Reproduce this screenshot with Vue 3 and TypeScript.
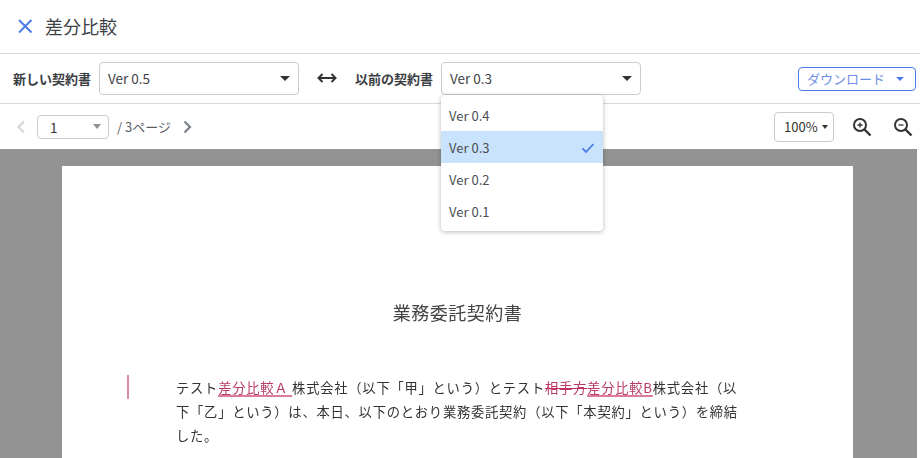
<script setup lang="ts">
const versions: { label: string; selected: boolean }[] = [
  { label: 'Ver 0.4', selected: false },
  { label: 'Ver 0.3', selected: true },
  { label: 'Ver 0.2', selected: false },
  { label: 'Ver 0.1', selected: false },
]
</script>

<template>
  <div class="app">
    <header class="title-bar">
      <svg class="close" width="16" height="16" viewBox="0 0 16 16" aria-hidden="true">
        <path d="M2 2 14.500 14.500M14.500 2 2 14.500" fill="none" stroke="#4a7be6" stroke-width="2" />
      </svg>
      <h1>差分比較</h1>
    </header>

    <section class="compare-bar">
      <span class="label">新しい契約書</span>
      <div class="select new-select">
        <span>Ver 0.5</span>
        <i class="caret"></i>
      </div>
      <svg class="swap" width="20" height="12" viewBox="0 0 20 12" aria-hidden="true">
        <path d="M1.500 6H18.500M5.500 2 1.500 6 5.500 10M14.500 2 18.500 6 14.500 10" fill="none" stroke="#333" stroke-width="2" />
      </svg>
      <span class="label">以前の契約書</span>
      <div class="select old-select">
        <span>Ver 0.3</span>
        <i class="caret"></i>
        <ul class="menu">
          <li v-for="v in versions" :key="v.label" :class="{ selected: v.selected }">
            <span>{{ v.label }}</span>
            <svg v-if="v.selected" width="14" height="12" viewBox="0 0 14 12" aria-hidden="true">
              <path d="M1.500 6.400 5 10 12.500 2" fill="none" stroke="#4a7be6" stroke-width="1.800" />
            </svg>
          </li>
        </ul>
      </div>
      <button class="download" type="button">
        ダウンロード
        <i class="caret small blue"></i>
      </button>
    </section>

    <section class="page-bar">
      <svg class="chev" width="10" height="14" viewBox="0 0 10 14" aria-hidden="true">
        <path d="M8 1.500 2.500 7 8 12.500" fill="none" stroke="#d3d6da" stroke-width="2.200" />
      </svg>
      <div class="page-select">
        <span>1</span>
        <i class="caret gray"></i>
      </div>
      <span class="page-total">/ 3ページ</span>
      <svg class="chev next" width="10" height="14" viewBox="0 0 10 14" aria-hidden="true">
        <path d="M2.500 1.500 8 7 2.500 12.500" fill="none" stroke="#7b818a" stroke-width="2.200" />
      </svg>
      <div class="zoom-select">
        <span>100%</span>
        <i class="caret tiny"></i>
      </div>
      <svg class="zoom-icon in" width="20" height="20" viewBox="0 0 20 20" aria-hidden="true">
        <circle cx="8" cy="8" r="6" fill="none" stroke="#333" stroke-width="2" />
        <path d="M12.500 12.500 18.500 18.500" stroke="#333" stroke-width="2.400" />
        <path d="M5.500 8H10.500M8 5.500V10.500" stroke="#333" stroke-width="1.300" />
      </svg>
      <svg class="zoom-icon" width="20" height="20" viewBox="0 0 20 20" aria-hidden="true">
        <circle cx="8" cy="8" r="6" fill="none" stroke="#333" stroke-width="2" />
        <path d="M12.500 12.500 18.500 18.500" stroke="#333" stroke-width="2.400" />
        <path d="M5.500 8H10.500" stroke="#333" stroke-width="1.300" />
      </svg>
    </section>

    <main class="viewer">
      <article class="sheet">
        <h2>業務委託契約書</h2>
        <div class="clause">
          <span class="change-mark"></span>
          <p>テスト<span class="added">差分比較Ａ </span>株式会社（以下「甲」という）とテスト<span class="removed">相手方</span><span class="added">差分比較B</span>株式会社（以下「乙」という）は、本日、以下のとおり業務委託契約（以下「本契約」という）を締結した。</p>
        </div>
      </article>
    </main>
  </div>
</template>

<style>
html, body { margin: 0; background: #fff; }
</style>

<style scoped>
.app {
  width: 920px;
  height: 458px;
  overflow: hidden;
  display: flex;
  flex-direction: column;
  font-family: "Noto Sans CJK JP", "Noto Sans", sans-serif;
  color: #333;
  background: #fff;
}
.title-bar {
  box-sizing: content-box;
  height: 51px;
  flex: none;
  display: flex;
  align-items: center;
  padding: 0 0 2px 17px;
  border-bottom: 1px solid #d8d9dc;
}
.close { margin-right: 12px; }
h1 { margin: 0; font-size: 18px; font-weight: 400; color: #3c3f44; }
.compare-bar {
  height: 49px;
  flex: none;
  display: flex;
  align-items: center;
  padding-left: 13px;
  border-bottom: 1px solid #d8d9dc;
}
.label { font-size: 13px; font-weight: 700; color: #3a3d42; white-space: nowrap; }
.select {
  position: relative;
  box-sizing: border-box;
  height: 33px;
  width: 200px;
  margin-left: 8px;
  display: flex;
  align-items: center;
  justify-content: space-between;
  padding: 0 8px;
  border: 1px solid #c8ccd2;
  border-radius: 4px;
  font-size: 13.5px;
  color: #3c4047;
}
.select > span { margin-bottom: 2px; }
.caret {
  display: block;
  width: 0;
  height: 0;
  border-left: 5px solid transparent;
  border-right: 5px solid transparent;
  border-top: 5px solid #333;
}
.caret.small { border-left-width: 4px; border-right-width: 4px; border-top-width: 4px; }
.caret.blue { border-top-color: #4a7be6; }
.caret.gray { border-top-color: #8c9097; border-left-width: 4.5px; border-right-width: 4.5px; }
.caret.tiny { border-left-width: 3.5px; border-right-width: 3.5px; border-top-width: 4px; }
.swap { margin: 0 18px; flex: none; position: relative; top: -0.5px; }
.old-select { margin-left: 8px; }
.menu {
  position: absolute;
  z-index: 5;
  top: 32px;
  left: -1px;
  width: 162px;
  margin: 0;
  padding: 4px 0;
  list-style: none;
  background: #fff;
  border-radius: 4px;
  box-shadow: 0 1px 5px rgba(0, 0, 0, 0.28);
  font-size: 13px;
}
.menu li {
  box-sizing: border-box;
  height: 32px;
  display: flex;
  align-items: center;
  justify-content: space-between;
  padding: 1px 8px 0;
  color: #4a4d52;
}
.menu li.selected { background: #cae3fd; }
.download {
  box-sizing: border-box;
  margin-left: auto;
  margin-right: 4px;
  width: 118px;
  height: 24px;
  padding: 0 0 0 8px;
  display: flex;
  align-items: center;
  gap: 11px;
  border: 1px solid #4a7be6;
  border-radius: 4px;
  background: #fff;
  color: #6d90e6;
  font: 400 13px "Noto Sans CJK JP", sans-serif;
  white-space: nowrap;
}
.page-bar {
  height: 45px;
  flex: none;
  display: flex;
  align-items: center;
  padding-left: 16px;
  font-size: 13px;
}
.chev { flex: none; }
.page-select {
  box-sizing: border-box;
  width: 72px;
  height: 24px;
  margin-left: 11px;
  padding: 0 7px 0 12px;
  display: flex;
  align-items: center;
  justify-content: space-between;
  border: 1px solid #c8ccd2;
  border-radius: 4px;
  font-size: 13.5px;
}
.page-total { margin-left: 8px; color: #5a5e64; }
.next { margin-left: 11px; }
.zoom-select {
  box-sizing: border-box;
  width: 60px;
  height: 30px;
  margin-left: auto;
  padding: 0 5px 0 9px;
  display: flex;
  align-items: center;
  justify-content: space-between;
  border: 1px solid #c8ccd2;
  border-radius: 4px;
  font-size: 13px;
}
.zoom-icon { flex: none; margin-right: 7px; }
.zoom-icon.in { margin-left: 18px; margin-right: 21px; }
.viewer {
  flex: 1;
  margin-right: 3px;
  padding: 17px 64px 0 62px;
  background: #939393;
  overflow: hidden;
}
.sheet {
  width: 791px;
  height: 400px;
  box-sizing: border-box;
  padding-top: 133px;
  background: #fff;
  color: #333;
}
h2 {
  margin: 0;
  text-align: center;
  font-size: 18px;
  line-height: 26px;
  font-weight: 400;
  letter-spacing: 0.5px;
  color: #444;
  filter: blur(0.3px);
}
.clause {
  position: relative;
  margin-top: 51px;
  padding: 0 109px 0 114px;
}
.change-mark {
  position: absolute;
  left: 65px;
  top: -1px;
  width: 1.5px;
  height: 24px;
  background: #dc8aa6;
}
p {
  margin: 0;
  font-size: 13.3px;
  line-height: 24px;
  letter-spacing: 0.75px;
  text-spacing-trim: space-all;
  font-kerning: none;
  filter: blur(0.3px);
}
.added {
  color: #b93a63;
  text-decoration: underline 1.5px #dc7a9a;
  text-underline-offset: 2px;
}
.removed {
  color: #b93a63;
  text-decoration: line-through 1px #c5305f;
}
</style>
